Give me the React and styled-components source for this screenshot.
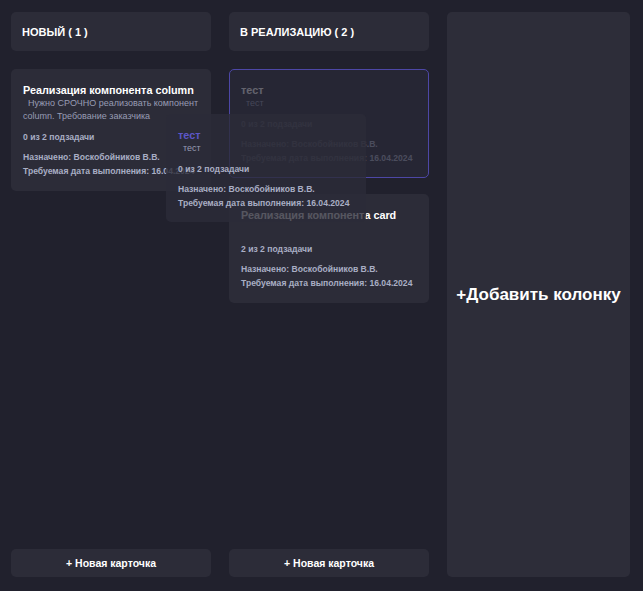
import React from 'react';
import styled, { createGlobalStyle } from 'styled-components';

const GlobalStyle = createGlobalStyle`
  html, body {
    margin: 0;
    padding: 0;
    background: #21212d;
    font-family: "Liberation Sans", Arial, sans-serif;
  }
  * { box-sizing: border-box; }
`;

const Board = styled.div`
  position: relative;
  display: flex;
  gap: 18px;
  height: 591px;
  padding: 12px 13px 14px 11px;
  background: #21212d;
`;

const Column = styled.div`
  width: 200px;
  flex-shrink: 0;
  display: flex;
  flex-direction: column;
`;

const ColumnHeader = styled.div`
  height: 39px;
  display: flex;
  align-items: center;
  padding: 0 11px;
  background: #2c2c38;
  border-radius: 5px;
  color: #ffffff;
  font-weight: bold;
  font-size: 11px;
`;

const CardList = styled.div`
  flex: 1;
  display: flex;
  flex-direction: column;
  gap: 16px;
  padding-top: 18px;
`;

const CardBox = styled.div`
  background: ${({ $ghost }) => ($ghost ? '#262634' : '#2c2c38')};
  border: 1px solid ${({ $ghost }) => ($ghost ? '#4d47a6' : 'transparent')};
  border-radius: 5px;
  padding: 13px 11px 12px 11px;
`;

const CardBody = styled.div`
  opacity: ${({ $ghost }) => ($ghost ? 0.28 : 1)};
`;

const Title = styled.div`
  font-size: 10.8px;
  line-height: 14px;
  font-weight: bold;
  color: ${({ $accent }) => ($accent ? '#5c56c8' : '#ffffff')};
  white-space: nowrap;
`;

const Description = styled.div`
  font-size: 9px;
  line-height: 13px;
  min-height: 13px;
  color: #989cb4;
  text-indent: 5px;
`;

const Subtasks = styled.div`
  margin-top: 8px;
  font-size: 8.6px;
  line-height: 13px;
  font-weight: bold;
  color: #a9aec4;
`;

const Meta = styled.div`
  margin-top: 6px;
  font-size: 8.6px;
  line-height: 14px;
  font-weight: bold;
  color: #a9aec4;
  white-space: nowrap;
`;

const AddCardButton = styled.div`
  height: 28px;
  display: flex;
  align-items: center;
  justify-content: center;
  background: #2c2c38;
  border-radius: 5px;
  color: #ffffff;
  font-size: 10.5px;
  font-weight: bold;
`;

const AddColumn = styled.div`
  flex: 1;
  display: flex;
  align-items: center;
  justify-content: center;
  background: #2d2d39;
  border-radius: 5px;
  color: #ffffff;
  font-size: 17px;
  font-weight: bold;
`;

const DragOverlay = styled.div`
  position: absolute;
  left: 166px;
  top: 114px;
  width: 200px;
  background: rgba(44, 44, 56, 0.8);
  border-radius: 5px;
  padding: 14px 12px 12px 12px;
  z-index: 10;
`;

const Card = ({ card, ghost, accent }) => (
  <CardBox $ghost={ghost}>
    <CardBody $ghost={ghost}>
      <Title $accent={accent}>{card.title}</Title>
      <Description>{card.description}</Description>
      <Subtasks>{card.subtasks}</Subtasks>
      <Meta>
        Назначено: {card.assignee}
        <br />
        Требуемая дата выполнения: {card.due}
      </Meta>
    </CardBody>
  </CardBox>
);

const dragged = {
  title: 'тест',
  description: 'тест',
  subtasks: '0 из 2 подзадачи',
  assignee: 'Воскобойников В.В.',
  due: '16.04.2024',
};

const columns = [
  {
    name: 'НОВЫЙ ( 1 )',
    cards: [
      {
        title: 'Реализация компонента column',
        description: 'Нужно СРОЧНО реализовать компонент column. Требование заказчика',
        subtasks: '0 из 2 подзадачи',
        assignee: 'Воскобойников В.В.',
        due: '16.04.2024',
      },
    ],
  },
  {
    name: 'В РЕАЛИЗАЦИЮ ( 2 )',
    cards: [
      { ...dragged, ghost: true },
      {
        title: 'Реализация компонента card',
        description: '',
        subtasks: '2 из 2 подзадачи',
        assignee: 'Воскобойников В.В.',
        due: '16.04.2024',
      },
    ],
  },
];

export default function App() {
  return (
    <>
      <GlobalStyle />
      <Board>
        {columns.map((col) => (
          <Column key={col.name}>
            <ColumnHeader>{col.name}</ColumnHeader>
            <CardList>
              {col.cards.map((card) => (
                <Card key={card.title} card={card} ghost={card.ghost} />
              ))}
            </CardList>
            <AddCardButton>+ Новая карточка</AddCardButton>
          </Column>
        ))}
        <AddColumn>+Добавить колонку</AddColumn>
        <DragOverlay>
          <Title $accent>{dragged.title}</Title>
          <Description>{dragged.description}</Description>
          <Subtasks>{dragged.subtasks}</Subtasks>
          <Meta>
            Назначено: {dragged.assignee}
            <br />
            Требуемая дата выполнения: {dragged.due}
          </Meta>
        </DragOverlay>
      </Board>
    </>
  );
}
